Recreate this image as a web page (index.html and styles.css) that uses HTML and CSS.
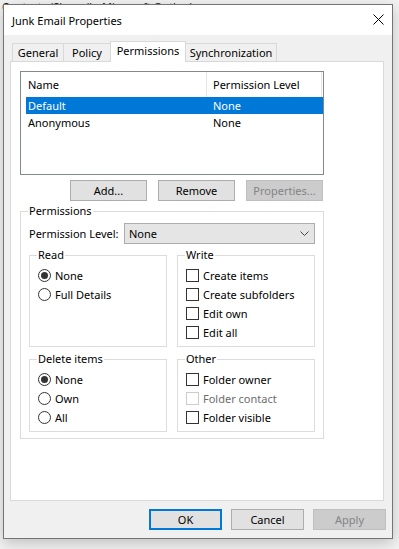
FILE: index.html
```html
<!DOCTYPE html>
<html lang="en">
<head>
    <meta charset="UTF-8">
    <meta name="viewport" content="width=device-width, initial-scale=1.0">
    <title>Junk Email Properties</title>
    <link rel="stylesheet" href="styles.css">
</head>
<body>
    <div class="backdrop">
        <p class="bg-top">Contacts (Shared) - Microsoft Outlook</p>
    </div>

    <div class="dialog">
        <div class="titlebar">
            <span class="title">Junk Email Properties</span>
            <svg class="close" width="11" height="11" viewBox="0 0 11 11">
                <path d="M0.5 0.5 L10.5 10.5 M10.5 0.5 L0.5 10.5" stroke="#000" stroke-width="1" fill="none"/>
            </svg>
        </div>

        <div class="tabs">
            <div class="tab tab-general">General</div>
            <div class="tab tab-policy">Policy</div>
            <div class="tab tab-perms active">Permissions</div>
            <div class="tab tab-sync">Synchronization</div>
        </div>

        <div class="page">
            <div class="listbox">
                <div class="list-row list-head">
                    <div class="col-name">Name</div>
                    <div class="col-level">Permission Level</div>
                </div>
                <div class="list-row selected">
                    <div class="col-name">Default</div>
                    <div class="col-level">None</div>
                </div>
                <div class="list-row">
                    <div class="col-name">Anonymous</div>
                    <div class="col-level">None</div>
                </div>
            </div>

            <div class="list-buttons">
                <button class="btn">Add...</button>
                <button class="btn">Remove</button>
                <button class="btn" disabled>Properties...</button>
            </div>

            <fieldset class="group perms">
                <legend>Permissions</legend>
                <div class="level-row">
                    <label>Permission Level:</label>
                    <div class="select">
                        <span>None</span>
                        <svg class="chevron" width="9" height="5" viewBox="0 0 9 5">
                            <path d="M0.5 0.5 L4.5 4.5 L8.5 0.5" stroke="#444" stroke-width="1" fill="none"/>
                        </svg>
                    </div>
                </div>

                <div class="group-grid">
                    <fieldset class="group">
                        <legend>Read</legend>
                        <div class="option"><span class="radio checked"></span>None</div>
                        <div class="option"><span class="radio"></span>Full Details</div>
                    </fieldset>
                    <fieldset class="group">
                        <legend>Write</legend>
                        <div class="option"><span class="check"></span>Create items</div>
                        <div class="option"><span class="check"></span>Create subfolders</div>
                        <div class="option"><span class="check"></span>Edit own</div>
                        <div class="option"><span class="check"></span>Edit all</div>
                    </fieldset>
                    <fieldset class="group">
                        <legend>Delete items</legend>
                        <div class="option"><span class="radio checked"></span>None</div>
                        <div class="option"><span class="radio"></span>Own</div>
                        <div class="option"><span class="radio"></span>All</div>
                    </fieldset>
                    <fieldset class="group">
                        <legend>Other</legend>
                        <div class="option"><span class="check"></span>Folder owner</div>
                        <div class="option disabled"><span class="check"></span>Folder contact</div>
                        <div class="option"><span class="check"></span>Folder visible</div>
                    </fieldset>
                </div>
            </fieldset>
        </div>

        <div class="dialog-buttons">
            <button class="btn btn-wide default">OK</button>
            <button class="btn btn-wide">Cancel</button>
            <button class="btn btn-wide" disabled>Apply</button>
        </div>
    </div>
</body>
</html>
```

FILE: styles.css
```css
body {
    margin: 0;
    background: #f3f3f3;
    font-family: 'Segoe UI', 'Noto Sans', sans-serif;
    font-size: 11px;
    color: #000;
    overflow: hidden;
}
.backdrop {
    color: #222;
    white-space: nowrap;
}
.backdrop p {
    margin: 0;
    line-height: 13px;
}
.bg-top {
    margin-top: -9px;
    padding-left: 2px;
}

/* dialog window */
.dialog {
    position: absolute;
    left: 3px;
    top: 4px;
    width: 388px;
    height: 533px;
    border: 1px solid #747474;
    background: #f0f0f0;
    box-shadow: 0 4px 14px rgba(0, 0, 0, 0.22);
    display: flex;
    flex-direction: column;
}
.titlebar {
    height: 30px;
    flex-shrink: 0;
    background: #fff;
    display: flex;
    align-items: center;
    justify-content: space-between;
    padding: 0 8px;
}
.close {
    margin-top: -2px;
}

/* tabs */
.tabs {
    display: flex;
    align-items: flex-end;
    margin: 7px 0 0 8px;
    height: 19px;
    flex-shrink: 0;
    position: relative;
    z-index: 1;
}
.tab {
    box-sizing: border-box;
    height: 18px;
    line-height: 18px;
    text-align: center;
    border: 1px solid #d9d9d9;
    border-bottom: none;
    margin-left: -1px;
    background: #f0f0f0;
}
.tab:first-child {
    margin-left: 0;
}
.tab.active {
    height: 21px;
    line-height: 18px;
    background: #fff;
    margin-bottom: -1px;
}
.tab-general { width: 52px; }
.tab-policy { width: 48px; }
.tab-perms { width: 76px; }
.tab-sync { width: 92px; }

.page {
    margin: 0 8px 0 6px;
    height: 440px;
    flex-shrink: 0;
    box-sizing: border-box;
    background: #fff;
    border: 1px solid #d9d9d9;
    padding: 9px 0 0 9px;
}

/* list view */
.listbox {
    box-sizing: border-box;
    width: 304px;
    height: 104px;
    border: 1px solid #828790;
    padding-left: 5px;
}
.list-row {
    display: grid;
    grid-template-columns: 181px 115px;
    height: 17px;
    line-height: 17px;
}
.list-head {
    height: 25px;
    line-height: 25px;
}
.list-head .col-name,
.list-head .col-level {
    border-right: 1px solid #e5e5e5;
}
.col-name {
    padding-left: 2px;
}
.col-level {
    padding-left: 6px;
}
.list-row.selected {
    background: #0078d7;
    color: #fff;
}

/* buttons */
.btn {
    font-family: inherit;
    font-size: 11px;
    color: #000;
    background: #e1e1e1;
    border: 1px solid #adadad;
    height: 21px;
    width: 77px;
    padding: 0;
    margin: 0;
}
.btn:disabled {
    background: #cccccc;
    border-color: #bfbfbf;
    color: #838383;
}
.list-buttons {
    display: flex;
    gap: 11px;
    margin: 5px 0 0 50px;
}
.btn-wide {
    width: 73px;
}
.btn.default {
    border: 2px solid #0078d7;
}
.dialog-buttons {
    display: flex;
    justify-content: flex-end;
    gap: 9px;
    margin: 8px 6px 0 0;
}

/* group boxes */
.group {
    margin: 0;
    padding: 0 8px 4px 8px;
    border: 1px solid #dcdcdc;
    min-width: 0;
}
.group legend {
    padding: 0 1px;
    margin-left: -1px;
    line-height: 16px;
}
.perms {
    width: 304px;
    box-sizing: border-box;
    margin-top: 2px;
    padding-bottom: 6px;
}
.level-row {
    display: flex;
    align-items: center;
    margin-top: 4px;
}
.level-row label {
    width: 95px;
}
.select {
    flex: 1;
    height: 21px;
    box-sizing: border-box;
    background: #e5e5e5;
    border: 1px solid #adadad;
    display: flex;
    align-items: center;
    justify-content: space-between;
    padding: 0 5px 0 4px;
}
.group-grid {
    display: grid;
    grid-template-columns: 1fr 1fr;
    column-gap: 10px;
    row-gap: 4px;
    margin-top: 3px;
}
.group-grid .group {
    padding-top: 3px;
}
.option {
    display: flex;
    align-items: center;
    gap: 4px;
    height: 19px;
}
.option.disabled {
    color: #6d6d6d;
}
.radio {
    width: 11px;
    height: 11px;
    border: 1px solid #333;
    border-radius: 50%;
    background: #fff;
    position: relative;
}
.radio.checked::after {
    content: '';
    position: absolute;
    left: 2px;
    top: 2px;
    width: 7px;
    height: 7px;
    border-radius: 50%;
    background: #333;
}
.check {
    width: 11px;
    height: 11px;
    border: 1px solid #333;
    background: #fff;
}
.option.disabled .check {
    border-color: #cccccc;
}
```
